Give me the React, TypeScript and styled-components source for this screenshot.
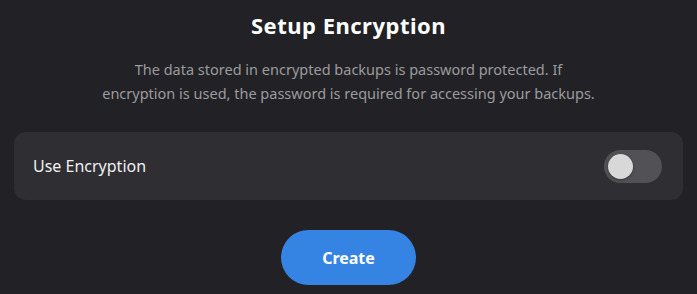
import * as React from 'react';
import styled, { createGlobalStyle } from 'styled-components';

const Global = createGlobalStyle`
  html, body {
    margin: 0;
    padding: 0;
    background: #222226;
  }
  body {
    font-family: 'Noto Sans', 'Open Sans', sans-serif;
  }
`

const Page = styled.div`
  width: 697px;
  height: 294px;
  box-sizing: border-box;
  padding: 10px 14px 0 14px;
  display: flex;
  flex-direction: column;
  align-items: center;
  background: #222226;
`

const Title = styled.h1`
  margin: 0;
  font-size: 22px;
  font-weight: 700;
  letter-spacing: 0.5px;
  color: #ffffff;
  line-height: 30px;
`

const Description = styled.p`
  margin: 17px 0 0 0;
  font-size: 14.5px;
  line-height: 24px;
  color: #9b9b9d;
  text-align: center;
`

const Card = styled.div`
  margin-top: 27px;
  align-self: stretch;
  height: 68px;
  box-sizing: border-box;
  padding: 0 21px 0 19px;
  display: flex;
  align-items: center;
  justify-content: space-between;
  background: #2e2e33;
  border-radius: 12px;
`

const Label = styled.span`
  font-size: 16px;
  color: #f0f0f0;
`

const Switch = styled.button<{ $on: boolean }>`
  width: 58px;
  height: 33px;
  padding: 4px;
  border: none;
  border-radius: 17px;
  background: ${p => (p.$on ? '#3584e4' : '#525256')};
  display: flex;
  align-items: center;
  justify-content: ${p => (p.$on ? 'flex-end' : 'flex-start')};
  cursor: pointer;
  box-sizing: border-box;
`

const Knob = styled.span`
  width: 25px;
  height: 25px;
  border-radius: 50%;
  background: #d8d8d8;
  box-shadow: 0 1px 3px rgba(0, 0, 0, 0.35);
`

const CreateButton = styled.button`
  margin-top: 30px;
  width: 135px;
  height: 55px;
  border: none;
  border-radius: 28px;
  background: #3584e4;
  color: #ffffff;
  font-family: 'Noto Sans', 'Open Sans', sans-serif;
  font-size: 16px;
  font-weight: 700;
  cursor: pointer;
`

export default function App() {
  const [on, setOn] = React.useState(false);
  return (
    <>
      <Global />
      <Page>
        <Title>Setup Encryption</Title>
        <Description>
          The data stored in encrypted backups is password protected. If
          <br />
          encryption is used, the password is required for accessing your backups.
        </Description>
        <Card>
          <Label>Use Encryption</Label>
          <Switch $on={on} onClick={() => setOn(!on)} aria-label="Use Encryption">
            <Knob />
          </Switch>
        </Card>
        <CreateButton>Create</CreateButton>
      </Page>
    </>
  );
}
